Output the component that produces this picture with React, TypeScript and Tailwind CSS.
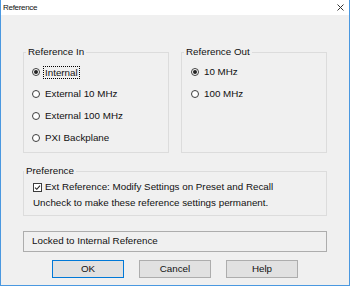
import React from 'react';

function Radio({ checked }: { checked?: boolean }) {
  return (
    <svg width="8" height="8" viewBox="0 0 8 8" className="shrink-0">
      <circle cx="4" cy="4" r="3.5" fill="#ffffff" stroke="#3c3c3c" strokeWidth="1" />
      {checked && <circle cx="4" cy="4" r="2" fill="#222222" />}
    </svg>
  );
}

function Checkbox({ checked }: { checked?: boolean }) {
  return (
    <svg width="9" height="9" viewBox="0 0 9 9" className="shrink-0">
      <rect x="0.5" y="0.5" width="8" height="8" fill="#ffffff" stroke="#3c3c3c" strokeWidth="1" />
      {checked && <path d="M2 4.6 L3.8 6.3 L7 2.6" fill="none" stroke="#222222" strokeWidth="1.1" />}
    </svg>
  );
}

function RadioRow({ label, checked, focused }: { label: string; checked?: boolean; focused?: boolean }) {
  return (
    <div className="flex h-[22px] items-center gap-[3px]">
      <Radio checked={checked} />
      <span className={focused ? 'border border-dotted border-black px-[1px] leading-[11px]' : 'px-[2px]'}>
        {label}
      </span>
    </div>
  );
}

export default function App() {
  return (
    <div className="flex h-[286px] w-[350px] flex-col border-x border-b border-[#4a98e0] bg-[#f0f0f0] font-['Liberation_Sans',Arial,sans-serif] text-[9.8px] text-[#111]">
      {/* title bar */}
      <div className="flex h-[15px] shrink-0 items-center justify-between bg-white pl-[2px] pr-[5px]">
        <span className="text-[8px] tracking-[-0.3px]">Reference</span>
        <svg width="7" height="7" viewBox="0 0 7 7">
          <path d="M0.5 0.5 L6.5 6.5 M6.5 0.5 L0.5 6.5" stroke="#333333" strokeWidth="1" />
        </svg>
      </div>

      <div className="flex flex-col px-[22px] pt-[31px]">
        <div className="flex h-[107px] justify-between">
          <fieldset className="h-full w-[146px] border border-[#dcdcdc]">
            <legend className="ml-[2px] px-[2px] leading-[12px]">Reference In</legend>
            <div className="flex flex-col pl-[8px] pt-[3px]">
              <RadioRow label="Internal" checked focused />
              <RadioRow label="External 10 MHz" />
              <RadioRow label="External 100 MHz" />
              <RadioRow label="PXI Backplane" />
            </div>
          </fieldset>
          <fieldset className="h-full w-[146px] border border-[#dcdcdc]">
            <legend className="ml-[2px] px-[2px] leading-[12px]">Reference Out</legend>
            <div className="flex flex-col pl-[9px] pt-[3px]">
              <RadioRow label="10 MHz" checked />
              <RadioRow label="100 MHz" />
            </div>
          </fieldset>
        </div>

        <fieldset className="mt-[12px] h-[51px] border border-[#dcdcdc]">
          <legend className="ml-0 px-[2px] leading-[12px]">Preference</legend>
          <div className="flex flex-col pl-[9px] pt-[2px]">
            <div className="flex h-[16px] items-center gap-[3px]">
              <Checkbox checked />
              <span>Ext Reference: Modify Settings on Preset and Recall</span>
            </div>
            <div className="flex h-[16px] items-center">Uncheck to make these reference settings permanent.</div>
          </div>
        </fieldset>

        <div className="mt-[15px] flex h-[21px] items-center border border-[#adadad] pl-[8px]">
          Locked to Internal Reference
        </div>

        <div className="mt-[8px] flex justify-center gap-[15px]">
          <button className="h-[18px] w-[72px] border border-[#0078d7] bg-[#e1e1e1]">OK</button>
          <button className="h-[18px] w-[72px] border border-[#adadad] bg-[#e1e1e1]">Cancel</button>
          <button className="h-[18px] w-[72px] border border-[#adadad] bg-[#e1e1e1]">Help</button>
        </div>
      </div>
    </div>
  );
}
